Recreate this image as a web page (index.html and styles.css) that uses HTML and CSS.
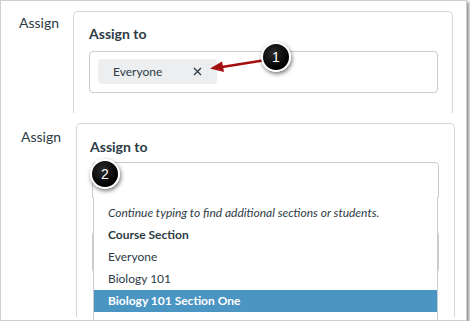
FILE: index.html
```html
<!DOCTYPE html>
<html>
<head>
  <title>Assign to</title>
  <link rel="stylesheet" href="styles.css">
</head>
<body>
  <div class="shot">
    <section class="row row-top">
      <div class="label">Assign</div>
      <div class="card">
        <h2 class="card-title">Assign to</h2>
        <div class="field">
          <span class="tag">Everyone
            <svg class="tag-x" width="9" height="9" viewBox="0 0 9 9"><path d="M1 1L8 8M8 1L1 8" stroke="#2d3b45" stroke-width="1.3" fill="none"/></svg>
          </span>
        </div>
      </div>
    </section>

    <section class="row row-bottom">
      <div class="label">Assign</div>
      <div class="card card-open">
        <h2 class="card-title">Assign to</h2>
        <div class="field field-search"></div>
        <div class="field field-under"></div>

        <ul class="menu">
          <li class="menu-hint">Continue typing to find additional sections or students.</li>
          <li class="menu-group">Course Section</li>
          <li>Everyone</li>
          <li>Biology 101</li>
          <li class="menu-active">Biology 101 Section One</li>
        </ul>
      </div>
    </section>

    <!-- callouts -->
    <svg class="arrow" width="64" height="20" viewBox="0 0 64 20">
      <line x1="58" y1="5" x2="14" y2="12" stroke="#a40f10" stroke-width="2.6"/>
      <polygon points="2,13.5 14,6.5 16,17" fill="#a40f10"/>
    </svg>
    <span class="callout callout-1">1</span>
    <span class="callout callout-2">2</span>
  </div>
</body>
</html>
```

FILE: styles.css
```css
body {
  margin: 0;
  font-family: Lato, "Open Sans", sans-serif;
  color: #2d3b45;
  background-color: #fff;
}

.shot {
  position: relative;
  box-sizing: border-box;
  width: 467px;
  height: 321px;
  padding-bottom: 3px;
  border: 1px solid #cfcfcf;
  box-shadow: 2px 2px 3px rgba(0, 0, 0, 0.45);
  display: flex;
  flex-direction: column;
  overflow: hidden;
}

.row {
  display: flex;
  align-items: stretch;
}

.row-top {
  height: 112px;
  flex-shrink: 0;
}

.row-bottom {
  flex: 1;
  min-height: 0;
}

.label {
  font-size: 14px;
  line-height: 17px;
}

.row-top .label {
  width: 54px;
  padding: 13px 0 0 18px;
}

.row-bottom .label {
  width: 55px;
  padding: 15px 0 0 20px;
}

.card {
  position: relative;
  box-sizing: border-box;
  margin-top: 10px;
  border: 1px solid #d3d8db;
  border-bottom: none;
  border-radius: 5px 5px 0 0;
}

.row-top .card {
  width: 380px;
  padding: 13px 14px 0 15px;
}

.card-open {
  width: 379px;
  padding: 14px 15px 0 13px;
}

.card-title {
  margin: 0;
  font-size: 14px;
  line-height: 18px;
  font-weight: bold;
}

.field {
  box-sizing: border-box;
  border: 1px solid #c7cdd1;
  border-radius: 4px;
}

.row-top .field {
  height: 42px;
  margin-top: 8px;
  padding: 7px 8px;
}

.tag {
  display: inline-flex;
  align-items: center;
  gap: 31px;
  height: 25px;
  padding: 0 15px;
  border-radius: 4px;
  background-color: #eceef0;
  font-size: 12px;
}

.tag-x {
  display: block;
}

.field-search {
  height: 36px;
  margin: 6px 0 0 2px;
  border-radius: 4px 4px 0 0;
}

.field-under {
  height: 42px;
  margin: 33px 0 0 2px;
}

.menu {
  position: absolute;
  left: 16px;
  top: 73px;
  width: 345px;
  box-sizing: border-box;
  margin: 0;
  padding: 5px 0 10px;
  list-style: none;
  background-color: #fff;
  border-left: 1px solid #c7cdd1;
  border-right: 1px solid #c7cdd1;
  font-size: 12px;
}

.menu li {
  height: 22px;
  line-height: 22px;
  padding: 0 14px;
  white-space: nowrap;
}

.menu .menu-hint {
  font-style: italic;
}

.menu .menu-group {
  font-weight: bold;
}

.menu .menu-active {
  background-color: #4b95c3;
  color: #fff;
  font-weight: bold;
}

.callout {
  position: absolute;
  box-sizing: border-box;
  width: 30px;
  height: 30px;
  border: 2px solid #fff;
  border-radius: 50%;
  background: radial-gradient(circle at 40% 35%, #2a2a2a, #000 70%);
  box-shadow: 1px 2px 4px rgba(0, 0, 0, 0.55);
  color: #fff;
  font-family: "Liberation Sans", Arial, sans-serif;
  font-size: 14px;
  line-height: 26px;
  text-align: center;
}

.callout-1 {
  left: 260px;
  top: 41px;
}

.callout-2 {
  left: 89px;
  top: 158px;
}

.arrow {
  position: absolute;
  left: 207px;
  top: 54px;
}
```
